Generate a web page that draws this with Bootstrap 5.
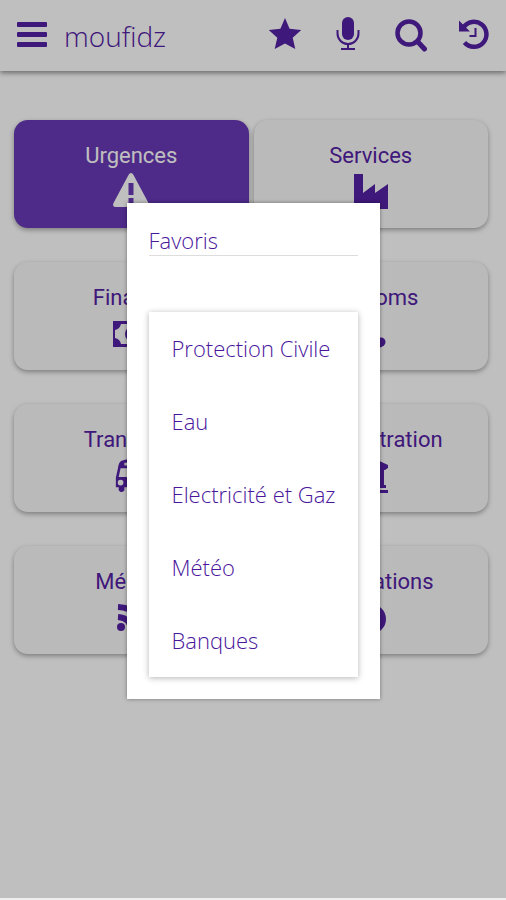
<!DOCTYPE html>
<html lang="fr">
<head>
<meta charset="utf-8">
<meta name="viewport" content="width=device-width, initial-scale=1">
<title>moufidz</title>
<link href="https://cdn.jsdelivr.net/npm/bootstrap@5.3.0/dist/css/bootstrap.min.css" rel="stylesheet">
<style>
  :root { --ink: #5420a4; --fill: #6939b7; }
  body { font-family: "Open Sans", "Noto Sans", sans-serif; color: var(--ink); }
  .app { min-height: 100vh; border-bottom: 2px solid #eee; }
  .topbar { height: 71px; padding: 0 16px 2px 16px; box-shadow: 0 2px 5px rgba(0,0,0,.45); }
  .brand { font-size: 28px; font-weight: 300; line-height: 36px; color: var(--ink); margin-left: 16px; padding-top: 3px; }
  .tools { gap: 31px; }
  .icon-btn { width: 32px; height: 36px; color: var(--ink); }
  svg { display: block; fill: currentColor; }
  .tiles { display: grid; grid-template-columns: 1fr 1fr; gap: 34px 5px; padding: 49px 18px 34px 14px; }
  .tile { height: 108px; padding-top: 21px; border-radius: 14px; background: #f9f9f9; color: var(--ink);
    font-family: Roboto, sans-serif; font-size: 22px; line-height: 30px; text-decoration: none;
    box-shadow: 0 2px 5px rgba(0,0,0,.35); }
  .tile.current { background: var(--fill); color: #fff; }
  .tile svg { margin-top: 2px; }
  .veil { background: rgba(0,0,0,.25); padding-top: 3px; }
  .sheet { width: 50%; padding: 22px; background: #fff; box-shadow: 0 0 4px rgba(0,0,0,.4); }
  .sheet h2 { font-size: 22px; font-weight: 300; line-height: 30px; margin: 0 0 56px; border-bottom: 1px solid #ddd; color: #4a169c; }
  .favs { box-shadow: 0 1px 6px rgba(0,0,0,.3); }
  .favs a { display: flex; align-items: center; height: 73px; padding-left: 23px; font-size: 22px; font-weight: 300; white-space: nowrap; color: #4a169c; text-decoration: none; }
</style>
<script src="https://cdn.jsdelivr.net/npm/bootstrap@5.3.0/dist/js/bootstrap.bundle.min.js"></script>
</head>
<body>
<div class="app position-relative bg-white">
  <header class="topbar d-flex align-items-center">
    <button class="icon-btn btn p-0 border-0" type="button" aria-label="Menu">
      <svg width="32" height="36" viewBox="0 0 32 36"><rect x="1" y="5" width="30" height="5" rx="1"/><rect x="1" y="15" width="30" height="5" rx="1"/><rect x="1" y="25" width="30" height="5" rx="1"/></svg>
    </button>
    <span class="brand">moufidz</span>
    <nav class="tools d-flex ms-auto" aria-label="Outils">
      <button class="icon-btn btn p-0 border-0" type="button" aria-label="Favoris">
        <svg width="32" height="36" viewBox="0 0 32 36"><path d="M16 1l4.600 10.800L32.300 13l-8.600 7.800 2.600 11.200L16 26.500 5.700 32l2.600-11.200L-.300 13l11.700-1.200z"/></svg>
      </button>
      <button class="icon-btn btn p-0 border-0" type="button" aria-label="Recherche vocale">
        <svg width="32" height="36" viewBox="0 0 32 36"><rect x="10" y="0" width="12" height="23" rx="6"/><path d="M5.500 13v3.500a10.500 10.500 0 0 0 21 0V13M16 27v4.500M9 32h14" fill="none" stroke="currentColor" stroke-width="2"/></svg>
      </button>
      <button class="icon-btn btn p-0 border-0" type="button" aria-label="Rechercher">
        <svg width="32" height="36" viewBox="0 0 32 36"><g fill="none" stroke="currentColor"><circle cx="14" cy="16" r="11.500" stroke-width="4.500"/><path d="M23 25l6.500 7" stroke-width="5" stroke-linecap="round"/></g></svg>
      </button>
      <button class="icon-btn btn p-0 border-0" type="button" aria-label="Historique">
        <svg width="32" height="36" viewBox="0 0 32 36"><path d="M5.500 10.500A12.500 12.500 0 1 1 6.500 25.500" fill="none" stroke="currentColor" stroke-width="4.500"/><path d="M1 3.500V14.500h11z"/><path d="M17.500 11v8h-6" fill="none" stroke="currentColor" stroke-width="2"/></svg>
      </button>
    </nav>
  </header>

  <main class="tiles">
    <a class="tile current d-flex flex-column align-items-center" href="#">Urgences
      <svg width="36" height="36" viewBox="0 0 36 36"><path fill-rule="evenodd" d="M18 0q1.500 0 2.500 2l15 28q1.500 4-2 4h-31q-3.500 0-2-4l15-28q1-2 2.500-2zM15.500 10v12h5V10zm0 15v5h5v-5z"/></svg></a>
    <a class="tile d-flex flex-column align-items-center" href="#">Services
      <svg width="36" height="36" viewBox="0 0 36 36"><path d="M1 1h9v19l12-9v9l13-9v25H1z"/></svg></a>
    <a class="tile d-flex flex-column align-items-center" href="#">Finance
      <svg width="36" height="36" viewBox="0 0 36 36"><path fill-rule="evenodd" d="M-1 6h38v26H-1zM8 9q-1 5-6 6v8q5 1 6 6h20q1-5 6-6v-8q-5-1-6-6z"/><ellipse cx="18" cy="19" rx="6" ry="7"/></svg></a>
    <a class="tile d-flex flex-column align-items-center" href="#">Télécoms
      <svg width="36" height="36" viewBox="0 0 36 36"><path d="M5 6l6-2 4 8-4 4q3 6 9 9l6-3 3 2v8q-10 3-18-7T5 6z"/><circle cx="28" cy="27" r="4.500"/></svg></a>
    <a class="tile d-flex flex-column align-items-center" href="#">Transport
      <svg width="36" height="36" viewBox="0 0 36 38"><path fill-rule="evenodd" d="M8 4q10-4 20 0 3 1 4 9l2 9v10h-3v3q-3 4-6 0v-3H11v3q-3 4-6 0v-3H2V22l2-9q1-8 4-9zM11 6v3h14V6zM7 12L5 21h26l-2-9zm0 12a3 3 0 1 0 0 6 3 3 0 0 0 0-6zm22 0a3 3 0 1 0 0 6 3 3 0 0 0 0-6z"/></svg></a>
    <a class="tile d-flex flex-column align-items-center" href="#">Administration
      <svg width="36" height="36" viewBox="0 0 36 36"><path d="M18 0l17 8v3l-3 2H4l-3-2V8zM5 13h6v17H5zm10 0h6v17h-6zm10 0h6v17h-6zM3 28h30v3H3zM1 33h34v3H1z"/></svg></a>
    <a class="tile d-flex flex-column align-items-center" href="#">Médias
      <svg width="36" height="36" viewBox="0 0 36 36"><circle cx="8" cy="28" r="4"/><path d="M5 18q13 1 14 14M5 8q23 1 24 24" fill="none" stroke="currentColor" stroke-width="6"/></svg></a>
    <a class="tile d-flex flex-column align-items-center" href="#">Informations
      <svg width="36" height="36" viewBox="0 0 36 36"><path fill-rule="evenodd" d="M18 5a15 15 0 1 1 0 30 15 15 0 0 1 0-30zm-2 5v4h4v-4zm-2 7v3h2v7h-2v3h8v-3h-2V17z"/></svg></a>
  </main>

  <div class="veil position-absolute top-0 start-0 w-100 h-100 d-flex align-items-center justify-content-center">
    <section class="sheet" role="dialog" aria-labelledby="fav-title">
      <h2 id="fav-title">Favoris</h2>
      <div class="favs">
        <a href="#">Protection Civile</a>
        <a href="#">Eau</a>
        <a href="#">Electricité et Gaz</a>
        <a href="#">Météo</a>
        <a href="#">Banques</a>
      </div>
    </section>
  </div>
</div>
</body>
</html>
